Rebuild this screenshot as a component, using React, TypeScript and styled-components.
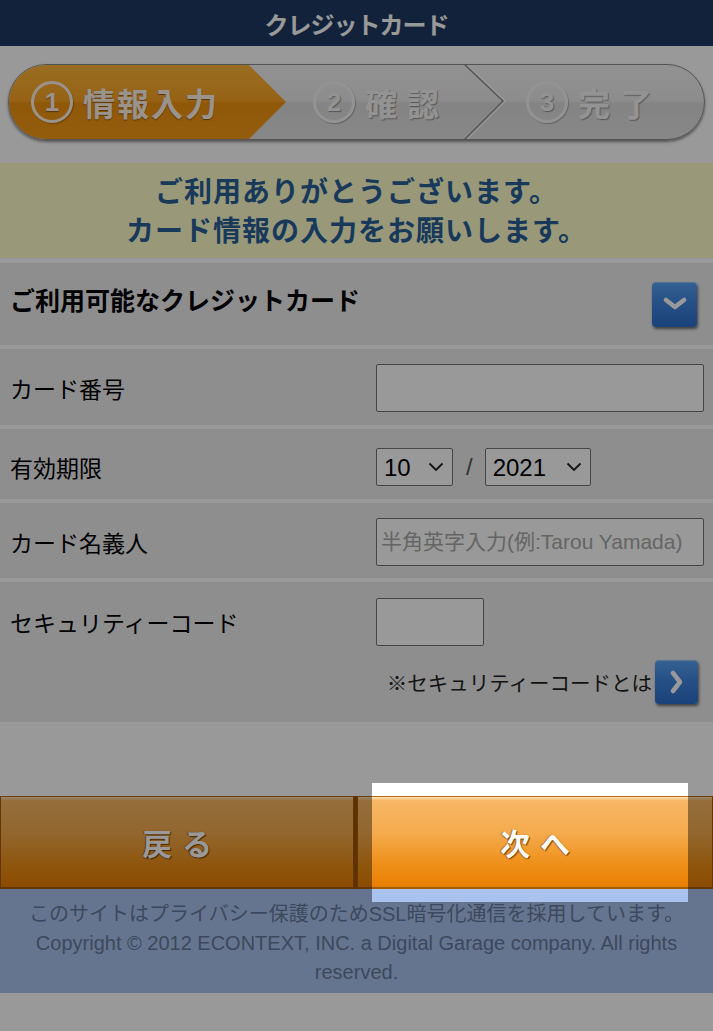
import styled, { createGlobalStyle } from "styled-components";

const GlobalStyle = createGlobalStyle`
  html, body {
    margin: 0;
    padding: 0;
    background: #ffffff;
  }
  body {
    font-family: "Noto Sans CJK JP", "Liberation Sans", sans-serif;
  }
`;

const Page = styled.div`
  position: relative;
  width: 713px;
  min-height: 1031px;
  overflow: hidden;
  background: #ffffff;
`;

const Header = styled.header`
  height: 46px;
  background: #1f3a62;
  color: #ffffff;
  display: flex;
  align-items: center;
  justify-content: center;
  font-size: 24px;
  font-weight: 700;
  letter-spacing: -1px;
`;

const Progress = styled.div`
  margin: 18px 8px 23px;
  height: 76px;
  box-sizing: border-box;
  border: 1px solid #8a8a8a;
  border-radius: 38px;
  overflow: hidden;
  display: flex;
  background: linear-gradient(#f4f4f4 0%, #eaeaea 48%, #dcdcdc 52%, #e2e2e2 100%);
  box-shadow: 0 2px 3px rgba(0, 0, 0, 0.45);
`;

const Step = styled.div<{ $active?: boolean; $width?: number; $pad: number }>`
  position: relative;
  display: flex;
  align-items: center;
  gap: 10px;
  flex: ${(p) => (p.$width ? `0 0 ${p.$width}px` : "1")};
  padding-left: ${(p) => p.$pad}px;
  box-sizing: border-box;
  font-size: 32px;
  font-weight: 700;
  color: ${(p) => (p.$active ? "#fff6ea" : "#f6f6f6")};
  text-shadow: ${(p) =>
    p.$active ? "0 1px 1px rgba(110, 55, 0, 0.7)" : "1px 1px 1px rgba(0, 0, 0, 0.35)"};
  background: ${(p) =>
    p.$active
      ? "linear-gradient(#ffb638 0%, #fba424 48%, #f0920e 52%, #f69c18 100%)"
      : "transparent"};
  clip-path: ${(p) =>
    p.$active
      ? "polygon(0 0, calc(100% - 37px) 0, 100% 50%, calc(100% - 37px) 100%, 0 100%)"
      : "none"};
`;

const StepNum = styled.span`
  width: 42px;
  height: 42px;
  box-sizing: border-box;
  border: 3px solid currentColor;
  border-radius: 50%;
  display: flex;
  align-items: center;
  justify-content: center;
  font-family: "Liberation Sans", sans-serif;
  font-size: 26px;
  line-height: 1;
  box-shadow: 1px 1px 1px rgba(0, 0, 0, 0.25);
`;

const StepText = styled.span<{ $spacing: number }>`
  letter-spacing: ${(p) => p.$spacing}px;
`;

const StepDivider = styled.svg`
  position: absolute;
  right: 0;
  top: -1px;
`;

const Message = styled.div`
  background: #ffffcc;
  color: #2a5f98;
  text-align: center;
  font-size: 28px;
  font-weight: 700;
  line-height: 39px;
  letter-spacing: 1px;
  padding: 8px 0 9px;
  height: 95px;
  box-sizing: border-box;
`;

const CardListRow = styled.div`
  margin-top: 5px;
  height: 82px;
  background: #ededed;
  display: flex;
  align-items: center;
  justify-content: space-between;
  padding: 0 16px 0 10px;
  font-size: 25px;
  font-weight: 700;
  color: #000;
`;

const CardListTitle = styled.span`
  padding-bottom: 10px;
`;

const BlueButton = styled.button<{ $w: number; $h: number }>`
  width: ${(p) => p.$w}px;
  height: ${(p) => p.$h}px;
  border: none;
  padding: 0;
  border-radius: 4px;
  background: linear-gradient(#5aa2f6 0%, #3f86e0 45%, #2d6fcc 100%);
  box-shadow: 1px 2px 3px rgba(0, 0, 0, 0.55), inset 0 1px 0 rgba(255, 255, 255, 0.35);
  display: flex;
  align-items: center;
  justify-content: center;
  cursor: pointer;
`;

const FieldRow = styled.div<{ $top: number; $bottom: number }>`
  margin-top: 4px;
  background: #ededed;
  display: grid;
  grid-template-columns: 366px 1fr;
  align-items: start;
  padding: ${(p) => p.$top}px 9px ${(p) => p.$bottom}px 10px;
`;

const Label = styled.div<{ $line: number }>`
  font-size: 23px;
  line-height: ${(p) => p.$line}px;
  color: #000;
`;

const TextInput = styled.input<{ $w?: number }>`
  width: ${(p) => (p.$w ? `${p.$w}px` : "100%")};
  height: 48px;
  box-sizing: border-box;
  border: 1px solid #767676;
  border-radius: 2px;
  background: #ffffff;
  padding: 0 4px;
  font-family: "Liberation Sans", "Noto Sans CJK JP", sans-serif;
  font-size: 21px;
  &::placeholder {
    color: #a9a9a9;
  }
`;

const DateGroup = styled.div`
  display: flex;
  align-items: center;
`;

const SelectBox = styled.div<{ $w: number }>`
  position: relative;
  width: ${(p) => p.$w}px;
  height: 38px;
`;

const Select = styled.select`
  appearance: none;
  width: 100%;
  height: 100%;
  box-sizing: border-box;
  border: 1px solid #767676;
  border-radius: 2px;
  background: #ffffff;
  color: #000;
  font-family: "Liberation Sans", sans-serif;
  font-size: 24px;
  padding: 0 0 0 7px;
`;

const SelectArrow = styled.svg`
  position: absolute;
  right: 9px;
  top: 14px;
  pointer-events: none;
`;

const Slash = styled.span`
  margin: 0 12px 0 13px;
  font-family: "Liberation Sans", sans-serif;
  font-size: 24px;
  font-weight: 300;
  color: #555;
`;

const NoteLine = styled.div`
  grid-column: 1 / -1;
  margin-top: 14px;
  margin-right: 6px;
  display: flex;
  justify-content: flex-end;
  align-items: center;
  gap: 3px;
  font-size: 20.5px;
  color: #222;
`;

const ButtonBar = styled.div`
  margin-top: 74px;
  height: 93px;
  display: grid;
  grid-template-columns: 354px 356px;
  column-gap: 3px;
  background: #9a5400;
`;

const NavButton = styled.button`
  border: none;
  border-top: 1px solid #b86a12;
  border-bottom: 2px solid #a85c00;
  border-left: 1px solid #a85c00;
  border-right: 1px solid #a85c00;
  padding: 0;
  background: linear-gradient(#fde2b8 0%, #f7b765 4%, #f5ab4e 40%, #ee8f18 75%, #e77f02 100%);
  color: #ffffff;
  font-family: "Noto Sans CJK JP", sans-serif;
  font-size: 30px;
  font-weight: 700;
  letter-spacing: 10px;
  text-indent: 10px;
  text-shadow: 1px 1px 1px #7a4000, -1px 0 1px rgba(120, 60, 0, 0.6);
  cursor: pointer;
`;

const Footer = styled.footer`
  height: 104px;
  box-sizing: border-box;
  padding-top: 11px;
  background: #aac3ee;
  color: #68789a;
  text-align: center;
  font-family: "Liberation Sans", "Noto Sans CJK JP", sans-serif;
  font-size: 20px;
  line-height: 29px;
`;

const Spotlight = styled.div`
  position: absolute;
  left: 372px;
  top: 783px;
  width: 316px;
  height: 119px;
  box-shadow: 0 0 0 2400px rgba(0, 0, 0, 0.4);
  pointer-events: none;
`;

const ChevronDown = () => (
  <svg width="24" height="14" viewBox="0 0 24 14">
    <polyline
      points="3,3 12,10 21,3"
      fill="none"
      stroke="#ffffff"
      strokeWidth="4.5"
      strokeLinecap="round"
      strokeLinejoin="round"
    />
  </svg>
);

const ChevronRight = () => (
  <svg width="14" height="24" viewBox="0 0 14 24">
    <polyline
      points="3,3 10,12 3,21"
      fill="none"
      stroke="#ffffff"
      strokeWidth="4.5"
      strokeLinecap="round"
      strokeLinejoin="round"
    />
  </svg>
);

const DropSelect = ({ width, value, options }: { width: number; value: string; options: string[] }) => (
  <SelectBox $w={width}>
    <Select defaultValue={value}>
      {options.map((o) => (
        <option key={o} value={o}>
          {o}
        </option>
      ))}
    </Select>
    <SelectArrow width="16" height="10" viewBox="0 0 16 10">
      <polyline points="1.5,1.5 8,8 14.5,1.5" fill="none" stroke="#222" strokeWidth="1.8" />
    </SelectArrow>
  </SelectBox>
);

const months = ["01", "02", "03", "04", "05", "06", "07", "08", "09", "10", "11", "12"];
const years = ["2021", "2022", "2023", "2024", "2025", "2026"];

const App = () => (
  <Page>
    <GlobalStyle />
    <Header>クレジットカード</Header>

    <Progress>
      <Step $active $width={277} $pad={22}>
        <StepNum>1</StepNum>
        <StepText $spacing={2}>情報入力</StepText>
      </Step>
      <Step $width={220} $pad={27}>
        <StepNum>2</StepNum>
        <StepText $spacing={10}>確認</StepText>
        <StepDivider width="42" height="76" viewBox="0 0 42 76">
          <polyline points="1,0 40,37 1,76" fill="none" stroke="#ffffff" strokeWidth="3" />
          <polyline points="0,0 39,37 0,76" fill="none" stroke="#8c8c8c" strokeWidth="1.5" />
        </StepDivider>
      </Step>
      <Step $pad={20}>
        <StepNum>3</StepNum>
        <StepText $spacing={10}>完了</StepText>
      </Step>
    </Progress>

    <Message>
      ご利用ありがとうございます。
      <br />
      カード情報の入力をお願いします。
    </Message>

    <CardListRow>
      <CardListTitle>ご利用可能なクレジットカード</CardListTitle>
      <BlueButton $w={45} $h={45} type="button">
        <ChevronDown />
      </BlueButton>
    </CardListRow>

    <FieldRow $top={15} $bottom={13}>
      <Label $line={48}>カード番号</Label>
      <TextInput type="text" />
    </FieldRow>

    <FieldRow $top={19} $bottom={13}>
      <Label $line={38}>有効期限</Label>
      <DateGroup>
        <DropSelect width={77} value="10" options={months} />
        <Slash>/</Slash>
        <DropSelect width={106} value="2021" options={years} />
      </DateGroup>
    </FieldRow>

    <FieldRow $top={15} $bottom={12}>
      <Label $line={48}>カード名義人</Label>
      <TextInput type="text" placeholder="半角英字入力(例:Tarou Yamada)" />
    </FieldRow>

    <FieldRow $top={16} $bottom={18}>
      <Label $line={48}>セキュリティーコード</Label>
      <TextInput type="text" $w={108} />
      <NoteLine>
        <span>※セキュリティーコードとは</span>
        <BlueButton $w={43} $h={44} type="button">
          <ChevronRight />
        </BlueButton>
      </NoteLine>
    </FieldRow>

    <ButtonBar>
      <NavButton type="button">戻る</NavButton>
      <NavButton type="button">次へ</NavButton>
    </ButtonBar>

    <Footer>
      このサイトはプライバシー保護のためSSL暗号化通信を採用しています。
      <br />
      Copyright © 2012 ECONTEXT, INC. a Digital Garage company. All rights reserved.
    </Footer>

    <Spotlight />
  </Page>
);

export default App;
